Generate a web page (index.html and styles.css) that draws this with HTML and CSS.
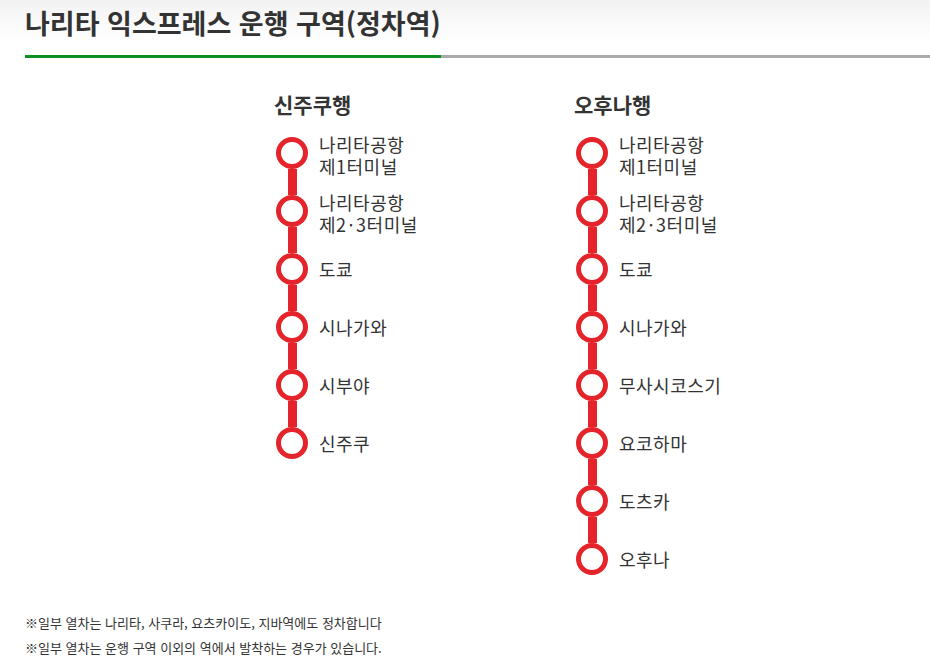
FILE: index.html
```html
<!DOCTYPE html>
<html lang="ko">
<head>
<meta charset="utf-8">
<title>나리타 익스프레스 운행 구역(정차역)</title>
<link rel="stylesheet" href="styles.css">
</head>
<body>
<header class="page-head">
  <div class="head-rule">
    <h1 class="title">나리타 익스프레스 운행 구역(정차역)</h1>
    <div class="rule-rest"></div>
  </div>
</header>

<main class="routes">
  <section class="route">
    <h2 class="route-name">신주쿠행</h2>
    <ol class="stops">
      <li class="stop first"><span class="marker"><span class="seg"></span><span class="dot"></span><span class="seg"></span></span><span class="name two">나리타공항<br>제1터미널</span></li>
      <li class="stop"><span class="marker"><span class="seg"></span><span class="dot"></span><span class="seg"></span></span><span class="name two">나리타공항<br>제2<span class="mid">·</span>3터미널</span></li>
      <li class="stop"><span class="marker"><span class="seg"></span><span class="dot"></span><span class="seg"></span></span><span class="name">도쿄</span></li>
      <li class="stop"><span class="marker"><span class="seg"></span><span class="dot"></span><span class="seg"></span></span><span class="name">시나가와</span></li>
      <li class="stop"><span class="marker"><span class="seg"></span><span class="dot"></span><span class="seg"></span></span><span class="name">시부야</span></li>
      <li class="stop last"><span class="marker"><span class="seg"></span><span class="dot"></span><span class="seg"></span></span><span class="name">신주쿠</span></li>
    </ol>
  </section>
  <section class="route">
    <h2 class="route-name">오후나행</h2>
    <ol class="stops">
      <li class="stop first"><span class="marker"><span class="seg"></span><span class="dot"></span><span class="seg"></span></span><span class="name two">나리타공항<br>제1터미널</span></li>
      <li class="stop"><span class="marker"><span class="seg"></span><span class="dot"></span><span class="seg"></span></span><span class="name two">나리타공항<br>제2<span class="mid">·</span>3터미널</span></li>
      <li class="stop"><span class="marker"><span class="seg"></span><span class="dot"></span><span class="seg"></span></span><span class="name">도쿄</span></li>
      <li class="stop"><span class="marker"><span class="seg"></span><span class="dot"></span><span class="seg"></span></span><span class="name">시나가와</span></li>
      <li class="stop"><span class="marker"><span class="seg"></span><span class="dot"></span><span class="seg"></span></span><span class="name">무사시코스기</span></li>
      <li class="stop"><span class="marker"><span class="seg"></span><span class="dot"></span><span class="seg"></span></span><span class="name">요코하마</span></li>
      <li class="stop"><span class="marker"><span class="seg"></span><span class="dot"></span><span class="seg"></span></span><span class="name">도츠카</span></li>
      <li class="stop last"><span class="marker"><span class="seg"></span><span class="dot"></span><span class="seg"></span></span><span class="name">오후나</span></li>
    </ol>
  </section>
</main>

<footer class="notes">
  <p class="note">※일부 열차는 나리타, 사쿠라, 요츠카이도, 지바역에도 정차합니다</p>
  <p class="note">※일부 열차는 운행 구역 이외의 역에서 발착하는 경우가 있습니다.</p>
</footer>
</body>
</html>
```

FILE: styles.css
```css
* {
  box-sizing: border-box;
}

html, body {
  margin: 0;
  padding: 0;
  background: #fff;
}

body {
  width: 930px;
  font-family: "Noto Sans CJK KR", "Noto Sans", sans-serif;
  color: #333;
}

.page-head {
  background: linear-gradient(to bottom, #f2f2f2 0px, #fafafa 22px, #ffffff 44px);
}

.head-rule {
  display: flex;
  align-items: flex-end;
  margin-left: 25px;
}

.title {
  margin: 0;
  padding: 5px 0 14px;
  font-size: 27px;
  line-height: 36px;
  font-weight: 700;
  color: #333;
  letter-spacing: 0;
  border-bottom: 3px solid #0d8e20;
  white-space: nowrap;
}

.rule-rest {
  flex: 1;
  border-bottom: 3px solid #aaaaaa;
}

.routes {
  display: flex;
  padding-left: 274px;
  margin-top: 32px;
}

.route {
  width: 300px;
}

.route-name {
  margin: 0 0 6px;
  font-size: 21px;
  line-height: 28px;
  font-weight: 700;
  color: #333;
}

.stops {
  list-style: none;
  margin: 0;
  padding: 0 0 0 2px;
}

.stop {
  display: flex;
  align-items: center;
  height: 58px;
}

.marker {
  display: flex;
  flex-direction: column;
  align-items: center;
  width: 32px;
  height: 100%;
  flex: none;
}

.seg {
  flex: 1;
  width: 9px;
  background: #e4242a;
}

.first .seg:first-child,
.last .seg:last-child {
  background: transparent;
}

.dot {
  width: 32px;
  height: 32px;
  flex: none;
  border: 5px solid #e4242a;
  border-radius: 50%;
  background: #fff;
}

.name {
  margin-left: 11px;
  font-size: 18px;
  line-height: 22px;
  letter-spacing: 0.5px;
  color: #333;
}

.name.two {
  margin-top: 4px;
}

.mid {
  margin: 0 2px;
}

.notes {
  margin: 22px 0 0 25px;
}

.note {
  margin: 0;
  font-size: 13px;
  line-height: 25px;
  color: #333;
}
```
